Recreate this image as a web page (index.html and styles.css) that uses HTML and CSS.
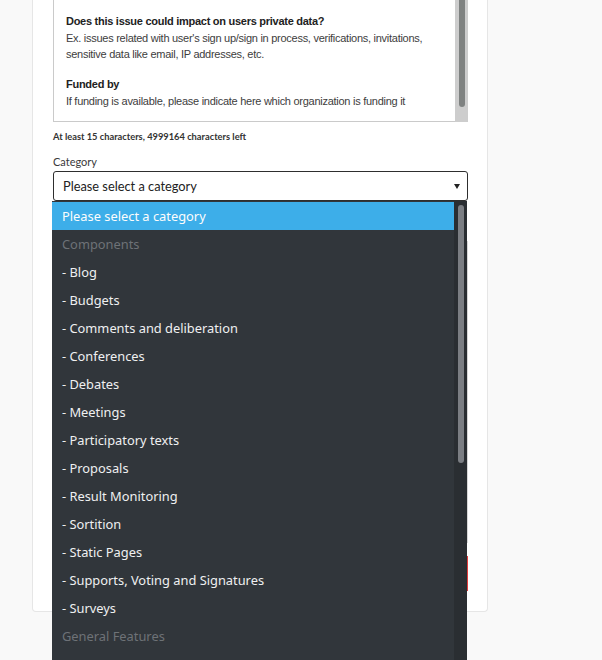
FILE: index.html
```html
<!DOCTYPE html>
<html lang="en">
<head>
<meta charset="utf-8">
<title>New issue</title>
<link rel="stylesheet" href="styles.css">
</head>
<body>
<div class="page">
  <div class="card">
    <div class="textarea">
      <div class="ta-content">
        <p><b>Does this issue could impact on users private data?</b><br>Ex. issues related with user's sign up/sign in process, verifications, invitations,<br>sensitive data like email, IP addresses, etc.</p>
        <p><b>Funded by</b><br>If funding is available, please indicate here which organization is funding it</p>
      </div>
      <div class="ta-scroll"><div class="ta-thumb"></div></div>
    </div>
    <p class="hint">At least 15 characters, 4999164 characters left</p>
    <label class="label">Category</label>
    <div class="select-wrap">
      <div class="select"><span>Please select a category</span><span class="arrow"></span></div>
      <div class="dropdown">
        <div class="dd-list">
          <div class="dd-item selected">Please select a category</div>
          <div class="dd-item group">Components</div>
          <div class="dd-item">- Blog</div>
          <div class="dd-item">- Budgets</div>
          <div class="dd-item">- Comments and deliberation</div>
          <div class="dd-item">- Conferences</div>
          <div class="dd-item">- Debates</div>
          <div class="dd-item">- Meetings</div>
          <div class="dd-item">- Participatory texts</div>
          <div class="dd-item">- Proposals</div>
          <div class="dd-item">- Result Monitoring</div>
          <div class="dd-item">- Sortition</div>
          <div class="dd-item">- Static Pages</div>
          <div class="dd-item">- Supports, Voting and Signatures</div>
          <div class="dd-item">- Surveys</div>
          <div class="dd-item group">General Features</div>
          <div class="dd-item empty"></div>
        </div>
        <div class="dd-scroll"><div class="dd-thumb"></div></div>
      </div>
    </div>
    <div class="hidden-field"></div>
    <div class="actions"><button class="btn-red" type="button">Send</button></div>
  </div>
</div>
</body>
</html>
```

FILE: styles.css
```css
html, body {
  margin: 0;
  padding: 0;
  height: 660px;
  overflow: hidden;
  background: #f9f9f9;
}

.page {
  padding-left: 32px;
}

.card {
  width: 456px;
  box-sizing: border-box;
  background: #ffffff;
  border: 1px solid #e6e6e6;
  border-top: none;
  border-radius: 0 0 4px 4px;
  padding: 0 19px 20px 20px;
  display: flex;
  flex-direction: column;
}

.textarea {
  display: flex;
  height: 122px;
}

.ta-content {
  flex: 1;
  border-left: 1px solid #cacaca;
  border-bottom: 1px solid #cacaca;
  padding: 13px 12px 0 12px;
  font-family: "Liberation Sans", Arial, sans-serif;
  font-size: 11px;
  line-height: 16.5px;
  color: #3d3d3d;
  letter-spacing: -0.27px;
}

.ta-content p {
  margin: 0 0 13.5px 0;
}

.ta-content b {
  color: #222222;
}

.ta-scroll {
  width: 13px;
  background: #cdcdcd;
  display: flex;
  justify-content: center;
}

.ta-thumb {
  width: 6px;
  height: 107px;
  background: #7f8281;
  border-radius: 0 0 3px 3px;
}

.hint {
  margin: 9px 0 0 0;
  font-family: Lato, "Liberation Sans", sans-serif;
  font-weight: 700;
  font-size: 9.3px;
  line-height: 12px;
  color: #333333;
}

.label {
  display: block;
  margin-top: 12px;
  font-family: Lato, "Liberation Sans", sans-serif;
  font-size: 11px;
  line-height: 14px;
  color: #3a3a3a;
}

.select-wrap {
  position: relative;
  margin-top: 2px;
}

.select {
  height: 30px;
  box-sizing: border-box;
  border: 1px solid #2e2e2e;
  border-radius: 3px;
  padding: 0 7px 0 9px;
  display: flex;
  align-items: center;
  justify-content: space-between;
  font-family: Lato, "Liberation Sans", sans-serif;
  font-size: 12.8px;
  color: #222222;
}

.arrow {
  width: 0;
  height: 0;
  border-left: 3.5px solid transparent;
  border-right: 3.5px solid transparent;
  border-top: 5px solid #222222;
}

.dropdown {
  position: absolute;
  top: 30px;
  left: -1px;
  width: 415px;
  height: 470px;
  background: #31363b;
  display: flex;
  z-index: 10;
}

.dd-list {
  flex: 1;
  padding-top: 1px;
}

.dd-item {
  height: 28px;
  line-height: 28px;
  padding-left: 10px;
  font-family: "Noto Sans", sans-serif;
  font-size: 12.85px;
  color: #eff0f1;
  white-space: nowrap;
}

.dd-item.selected {
  background: #3daee9;
  color: #fcfcfc;
}

.dd-item.group {
  color: #6e7277;
}

.dd-scroll {
  width: 13px;
  background: #2a2e32;
  display: flex;
  justify-content: center;
  padding-top: 4px;
  box-sizing: border-box;
}

.dd-scroll .dd-thumb {
  width: 6px;
  height: 258px;
  background: #7b7e83;
  border-radius: 3px;
}

.hidden-field {
  margin-top: 40px;
  height: 300px;
  border: 1px solid #d6d6d6;
}

.actions {
  margin-top: 13px;
  display: flex;
  justify-content: flex-end;
}

.btn-red {
  height: 35px;
  width: 120px;
  border: 1px solid #e23b3b;
  background: #ffffff;
  color: #e23b3b;
  font-family: Lato, "Liberation Sans", sans-serif;
  font-size: 13px;
}
```
